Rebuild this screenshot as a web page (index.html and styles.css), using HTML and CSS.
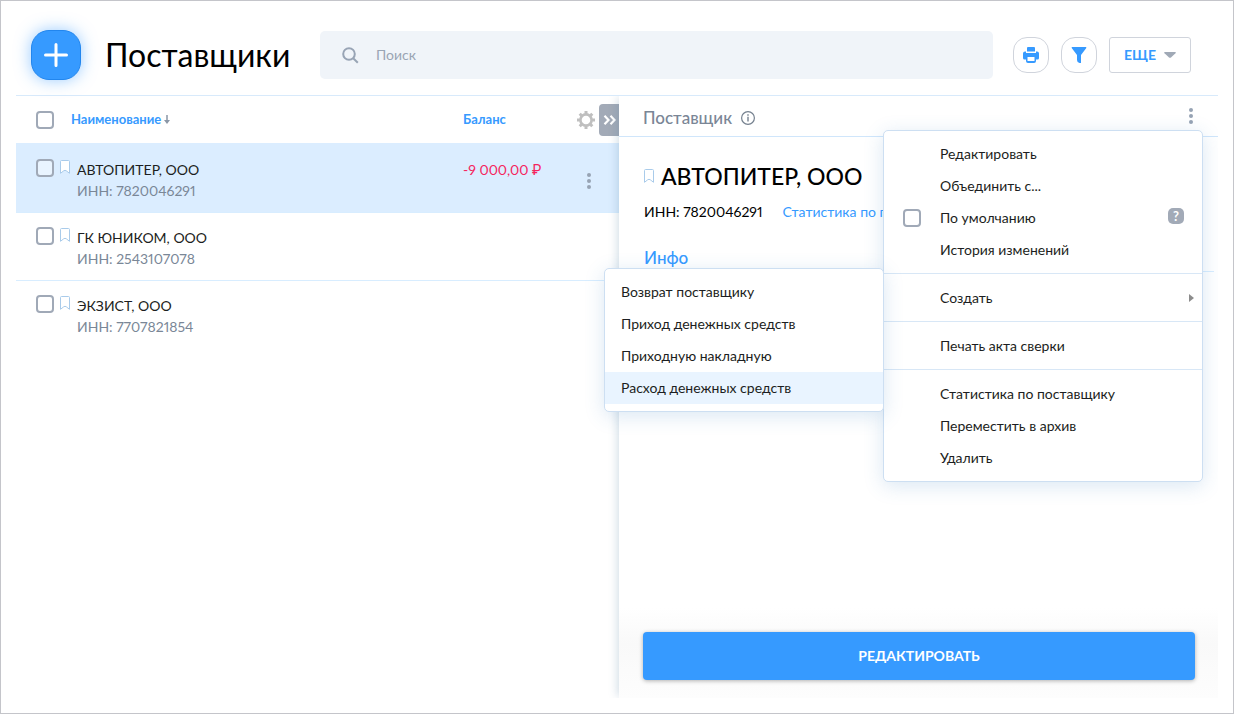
FILE: index.html
```html
<!DOCTYPE html>
<html lang="ru">
<head>
  <meta charset="UTF-8">
  <meta name="viewport" content="width=device-width, initial-scale=1.0">
  <title>Поставщики</title>
  <link rel="stylesheet" href="styles.css">
</head>
<body>
  <!-- Общие иконки -->
  <svg class="sprite" aria-hidden="true">
    <symbol id="bookmark" viewBox="0 0 10 14">
      <path d="M.5 13.3V1.5q0-1 1-1h7q1 0 1 1v11.8L6.3 10.8q-1.3-1-2.6 0z" fill="#fff" stroke="#a9cbea"/>
    </symbol>
    <symbol id="dots" viewBox="0 0 4 16">
      <circle cx="2" cy="2" r="2"/><circle cx="2" cy="8" r="2"/><circle cx="2" cy="14" r="2"/>
    </symbol>
  </svg>

  <div class="app">
    <header class="header">
      <button class="add-btn" aria-label="Добавить">
        <svg width="24" height="24" viewBox="0 0 24 24"><path d="M12 1.5v21M1.5 12h21" stroke="#fff" stroke-width="3" stroke-linecap="round"/></svg>
      </button>
      <h1 class="title">Поставщики</h1>
      <label class="search">
        <svg width="17" height="17" viewBox="0 0 17 17" fill="none" stroke="#98a4b5" stroke-width="2"><circle cx="7" cy="7" r="5.8"/><path d="M11.2 11.2l4.6 4.6"/></svg>
        <input type="text" placeholder="Поиск" aria-label="Поиск">
      </label>
      <div class="tools">
        <button class="round-btn" aria-label="Печать">
          <svg width="16" height="16" viewBox="0 0 16 16" fill="#369aff">
            <path d="M4 4.500V1q0-1 1-1h6q1 0 1 1v3.500z"/>
            <path fill-rule="evenodd" d="M0 6.500q0-2 2-2h1v1.500h10V4.500h1q2 0 2 2V11q0 1.500-1.500 1.500H13V14q0 2-2 2H5q-2 0-2-2v-1.500H1.500Q0 12.500 0 11zM4.500 10v4h7v-4z"/>
          </svg>
        </button>
        <button class="round-btn" aria-label="Фильтр">
          <svg width="16" height="16" viewBox="0 0 16 16" fill="#369aff"><path d="M1.300 0h13.400q1 0 .600.900L10 8v8H8.500Q6 15.500 6 13V8L.700.900Q.300 0 1.300 0z"/></svg>
        </button>
        <button class="more-btn">ЕЩЕ
          <svg width="12" height="6" viewBox="0 0 12 6" fill="#a0a9b6"><path d="M1 0h10q1.500.200.500 1.200L7 5.500q-1 .700-2 0L.500 1.200Q-.500.200 1 0z"/></svg>
        </button>
      </div>
    </header>

    <main class="content">
      <section class="list">
        <table class="suppliers">
          <thead>
            <tr>
              <th class="col-check"><input type="checkbox" class="check" aria-label="Выбрать все"></th>
              <th class="col-name">Наименование
                <svg width="6" height="9" viewBox="0 0 6 9"><path d="M3 0v7" stroke="#8a96a6" stroke-width="1.500"/><path d="M0 5h6L3 9z" fill="#8a96a6"/></svg>
              </th>
              <th class="col-balance">Баланс</th>
              <th class="col-actions">
                <button class="icon-btn gear" aria-label="Настройки">
                  <svg width="18" height="18" viewBox="0 0 18 18" fill="none" stroke="#bfbfbf">
                    <circle cx="9" cy="9" r="5.600" stroke-width="2.600"/>
                    <path d="M9 0v3M9 15v3M0 9h3M15 9h3M2.700 2.700l2 2M13.300 13.300l2 2M2.700 15.300l2-2M13.300 4.700l2-2" stroke-width="3"/>
                  </svg>
                </button>
              </th>
            </tr>
          </thead>
          <tbody>
            <tr class="selected">
              <td class="col-check"><input type="checkbox" class="check" aria-label="АВТОПИТЕР, ООО"></td>
              <td>
                <div class="supplier">
                  <svg class="bookmark"><use href="#bookmark"/></svg>
                  <div>АВТОПИТЕР, ООО<div class="inn">ИНН: 7820046291</div></div>
                </div>
              </td>
              <td class="negative">-9 000,00 ₽</td>
              <td class="col-actions"><button class="icon-btn" aria-label="Действия"><svg class="dots"><use href="#dots"/></svg></button></td>
            </tr>
            <tr>
              <td class="col-check"><input type="checkbox" class="check" aria-label="ГК ЮНИКОМ, ООО"></td>
              <td>
                <div class="supplier">
                  <svg class="bookmark"><use href="#bookmark"/></svg>
                  <div>ГК ЮНИКОМ, ООО<div class="inn">ИНН: 2543107078</div></div>
                </div>
              </td>
              <td></td>
              <td></td>
            </tr>
            <tr>
              <td class="col-check"><input type="checkbox" class="check" aria-label="ЭКЗИСТ, ООО"></td>
              <td>
                <div class="supplier">
                  <svg class="bookmark"><use href="#bookmark"/></svg>
                  <div>ЭКЗИСТ, ООО<div class="inn">ИНН: 7707821854</div></div>
                </div>
              </td>
              <td></td>
              <td></td>
            </tr>
          </tbody>
        </table>
        <button class="collapse-btn" aria-label="Свернуть">
          <svg width="13" height="10" viewBox="0 0 13 10" fill="none" stroke="#fff" stroke-width="2.200"><path d="M1.500.800L5.500 5l-4 4.200M7.500.800l4 4.200-4 4.200"/></svg>
        </button>
      </section>

      <section class="panel">
        <div class="panel-head">
          <h2>Поставщик</h2>
          <svg width="14" height="14" viewBox="0 0 14 14" fill="none" stroke="#75818f"><circle cx="7" cy="7" r="6.400" stroke-width="1.200"/><path d="M7 5.800v4.700M7 3.300v1.400" stroke-width="1.400"/></svg>
          <button class="icon-btn panel-dots" aria-label="Меню"><svg class="dots"><use href="#dots"/></svg></button>
        </div>
        <div class="panel-body">
          <div class="name-row">
            <svg class="bookmark"><use href="#bookmark"/></svg>
            <h3>АВТОПИТЕР, ООО</h3>
          </div>
          <div class="info-row">
            <span>ИНН: 7820046291</span>
            <a href="#">Статистика по поставщику</a>
          </div>
          <div class="tabs"><a href="#">Инфо</a></div>
        </div>
        <div class="panel-foot">
          <button class="edit-btn">РЕДАКТИРОВАТЬ</button>
        </div>

        <div class="menu main-menu">
          <div class="group">
            <button class="item">Редактировать</button>
            <button class="item">Объединить с...</button>
            <div class="item">
              <input type="checkbox" class="check" id="default">
              <label for="default">По умолчанию</label>
              <span class="help">?</span>
            </div>
            <button class="item">История изменений</button>
          </div>
          <div class="group has-sub">
            <button class="item">Создать
              <svg class="arrow" width="5" height="8" viewBox="0 0 5 8"><path d="M0 0l5 4-5 4z" fill="#8c8c8c"/></svg>
            </button>
            <div class="menu submenu">
              <button class="item">Возврат поставщику</button>
              <button class="item">Приход денежных средств</button>
              <button class="item">Приходную накладную</button>
              <button class="item active">Расход денежных средств</button>
            </div>
          </div>
          <div class="group">
            <button class="item">Печать акта сверки</button>
          </div>
          <div class="group">
            <button class="item">Статистика по поставщику</button>
            <button class="item">Переместить в архив</button>
            <button class="item">Удалить</button>
          </div>
        </div>
      </section>
    </main>
  </div>
</body>
</html>
```
FILE: styles.css
```css
* {
  box-sizing: border-box;
}
body {
  margin: 0;
  font-family: Lato, Roboto, sans-serif;
  font-size: 14px;
  line-height: 20px;
  font-variant-numeric: proportional-nums;
  color: #1c1e21;
  background: #fff;
}
button, input {
  font: inherit;
  color: inherit;
}
button {
  padding: 0;
  border: none;
  background: none;
  cursor: pointer;
}
a {
  color: #369aff;
  text-decoration: none;
}
h1, h2, h3 {
  margin: 0;
  font-weight: 400;
}
svg {
  flex: none;
}
.sprite {
  position: absolute;
  width: 0;
  height: 0;
}
.app {
  display: flex;
  flex-direction: column;
  min-height: 100vh;
  padding: 0 15px 15px;
  border: 1px solid #c4c5ca;
}

/* Шапка */
.header {
  display: flex;
  align-items: center;
  padding: 29px 27px 15px 15px;
  border-bottom: 1px solid #d8eafb;
}
.add-btn {
  display: flex;
  align-items: center;
  justify-content: center;
  width: 50px;
  height: 50px;
  border: 1px solid #2286ee;
  border-radius: 18px;
  background: #369aff;
  box-shadow: 0 0 16px rgba(54, 154, 255, 0.5);
}
.title {
  flex: 0 0 215px;
  margin-left: 24px;
  font-size: 32px;
  line-height: 48px;
  color: #000;
}
.search {
  display: flex;
  flex: 1;
  align-items: center;
  gap: 17px;
  height: 48px;
  padding: 0 22px;
  border-radius: 5px;
  background: #f0f4f9;
}
.search input {
  flex: 1;
  min-width: 0;
  padding: 0;
  border: none;
  outline: none;
  background: none;
}
.search input::placeholder {
  color: #9aa5b4;
}
.tools {
  display: flex;
  gap: 12px;
  margin-left: 20px;
}
.round-btn,
.more-btn {
  display: flex;
  align-items: center;
  justify-content: center;
  width: 36px;
  height: 36px;
  border: 1px solid #d0d4dc;
  border-radius: 14px;
}
.more-btn {
  gap: 8px;
  width: 82px;
  border-radius: 3px;
  font-weight: 700;
  color: #369aff;
}

/* Список */
.content {
  display: grid;
  flex: 1;
  grid-template-columns: 603fr 599fr;
}
.list {
  position: relative;
}
.suppliers {
  width: 100%;
  border-spacing: 0;
  table-layout: fixed;
  line-height: 21px;
}
.suppliers th {
  height: 48px;
  padding: 0;
  border-bottom: 1px solid #dbedff;
  font-size: 13px;
  text-align: left;
  color: #369aff;
}
.suppliers td {
  height: 68px;
  padding: 15px 0 10px;
  border-bottom: 1px solid #d8edff;
  vertical-align: top;
}
.suppliers tr:last-child td {
  border-bottom: none;
}
.suppliers .selected td {
  height: 69px;
  background: #dbedff;
}
.suppliers .col-check {
  width: 44px;
  padding-left: 20px;
}
.suppliers .col-name {
  padding-left: 11px;
}
.suppliers .col-balance {
  width: 100px;
}
.suppliers .col-actions {
  width: 56px;
  vertical-align: middle;
}
.suppliers tbody tr + tr td {
  padding-top: 14px;
}
.check {
  display: block;
  width: 18px;
  height: 18px;
  margin: 0;
  appearance: none;
  border: 2px solid #a0a9b7;
  border-radius: 4px;
  background: rgba(255, 255, 255, 0.4);
}
.supplier {
  display: flex;
  gap: 7px;
}
.supplier .bookmark {
  margin-top: 1px;
}
.inn {
  color: #7a8797;
}
.negative {
  color: #f5245c;
}
.bookmark {
  width: 10px;
  height: 14px;
}
.icon-btn {
  display: flex;
  color: #97a3b4;
}
.icon-btn .dots {
  width: 4px;
  height: 16px;
  margin-left: 24px;
  fill: currentColor;
}
.gear {
  margin-left: 14px;
}
.collapse-btn {
  position: absolute;
  top: 8px;
  right: 0;
  display: flex;
  align-items: center;
  justify-content: center;
  width: 20px;
  height: 32px;
  border-radius: 4px 0 0 4px;
  background: #a2aab7;
}

/* Карточка поставщика */
.panel {
  position: relative;
  display: flex;
  flex-direction: column;
  min-width: 0;
  background: #fff;
  box-shadow: -4px 0 8px -2px rgba(90, 130, 165, 0.25);
  clip-path: inset(0 0 0 -60px);
}
.panel-head {
  display: flex;
  align-items: center;
  gap: 9px;
  height: 41px;
  padding: 4px 25px 0 24px;
  border-bottom: 1px solid #d0e6fb;
}
.panel-head h2 {
  font-size: 17px;
  font-weight: 500;
  color: #7a8696;
}
.panel-dots {
  align-self: flex-start;
  margin: 8px 0 0 auto;
}
.panel-body {
  flex: 1;
  padding: 23px 4px 0 25px;
}
.name-row {
  display: flex;
  gap: 7px;
  align-items: center;
}
.name-row h3 {
  font-size: 23px;
  line-height: 32px;
  font-weight: 500;
  color: #000;
}
.info-row {
  display: flex;
  gap: 20px;
  margin-top: 10px;
  color: #000;
}
.tabs {
  margin-top: 26px;
  padding-bottom: 3px;
  border-bottom: 1px solid #d8edff;
  font-size: 17px;
  font-weight: 500;
}
.panel-foot {
  padding: 24px 23px 18px 24px;
  background: linear-gradient(#fff, #f9f9f9 40%, #fdfdfd);
}
.edit-btn {
  width: 100%;
  height: 48px;
  border-radius: 4px;
  background: #369aff;
  box-shadow: 0 1px 4px rgba(0, 0, 0, 0.3);
  font-weight: 700;
  color: #fff;
}

/* Выпадающее меню */
.menu {
  position: absolute;
  border: 1px solid #cddff2;
  border-radius: 5px;
  background: #fff;
  box-shadow: 0 4px 20px rgba(50, 120, 190, 0.18);
}
.main-menu {
  top: 34px;
  right: 15px;
  width: 320px;
}
.group {
  padding: 8px 0 7px;
}
.group:first-child {
  padding-top: 7px;
}
.group + .group {
  border-top: 1px solid #d8e7f6;
}
.item {
  display: flex;
  align-items: center;
  width: 100%;
  height: 32px;
  padding: 0 18px 0 56px;
  text-align: left;
}
.item .check {
  margin: 0 19px 0 -37px;
}
.help {
  width: 16px;
  height: 16px;
  margin: 0 0 4px auto;
  border-radius: 5px;
  background: #a2aab7;
  font-size: 13px;
  line-height: 16px;
  font-weight: 700;
  text-align: center;
  color: #fff;
}
.arrow {
  margin: 0 -10px 0 auto;
}
.has-sub {
  position: relative;
}
.submenu {
  top: -6px;
  right: 100%;
  width: 280px;
  padding: 7px 0;
}
.submenu .item {
  padding-left: 16px;
}
.item.active {
  background: #e9f4ff;
}
```
